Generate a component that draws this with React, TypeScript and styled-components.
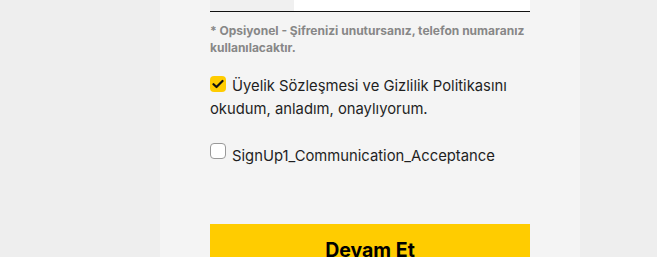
import React, { useState } from 'react';
import styled, { createGlobalStyle } from 'styled-components';

const GlobalStyle = createGlobalStyle`
  html, body {
    margin: 0;
    padding: 0;
    background: #eeeeee;
    font-family: Inter, "Noto Sans", sans-serif;
    overflow: hidden;
  }
`;

const Page = styled.div`
  display: flex;
  width: 657px;
  height: 257px;
  padding-left: 160px;
  box-sizing: border-box;
`;

const Panel = styled.div`
  width: 420px;
  flex-shrink: 0;
  background: #f4f4f4;
  padding: 0 50px;
  box-sizing: border-box;
  display: flex;
  flex-direction: column;
  margin-top: -30px;
`;

const PhoneField = styled.div`
  display: flex;
  flex-shrink: 0;
  height: 41px;
  border-bottom: 1px solid #111111;
`;

const CodeBox = styled.div`
  width: 84px;
  background: #f0f0f0;
`;

const NumberInput = styled.input`
  flex: 1;
  min-width: 0;
  border: none;
  background: #ffffff;
  outline: none;
  font-family: inherit;
`;

const Hint = styled.p`
  margin: 10px 0 0;
  font-size: 12px;
  line-height: 17px;
  font-weight: 700;
  color: #878787;
`;

const CheckLabel = styled.label<{ $top: number }>`
  display: block;
  margin-top: ${(p) => p.$top}px;
  font-size: 14.8px;
  line-height: 23px;
  color: #1f1f1f;
  cursor: pointer;
`;

const Box = styled.span<{ $checked: boolean }>`
  display: inline-flex;
  align-items: center;
  justify-content: center;
  width: 16px;
  height: 16px;
  box-sizing: border-box;
  margin: -4px 6px 0 0;
  vertical-align: 2px;
  border-radius: 4px;
  background: ${(p) => (p.$checked ? '#ffcc00' : '#ffffff')};
  border: ${(p) => (p.$checked ? 'none' : '1px solid #999999')};
`;

const HiddenInput = styled.input`
  display: none;
`;

const SubmitButton = styled.button`
  flex-shrink: 0;
  margin-top: 56px;
  height: 52px;
  border: none;
  background: #ffcc00;
  font-family: inherit;
  font-size: 19.5px;
  font-weight: 700;
  color: #000000;
  cursor: pointer;
`;

function Check({ checked, onToggle }: { checked: boolean; onToggle: () => void }) {
  return (
    <>
      <HiddenInput type="checkbox" checked={checked} onChange={onToggle} />
      <Box $checked={checked}>
        {checked && (
          <svg width="12" height="10" viewBox="0 0 12 10">
            <path d="M1.5 5.2 L4.5 8 L10.5 2" fill="none" stroke="#111" strokeWidth="2.2" strokeLinecap="round" strokeLinejoin="round" />
          </svg>
        )}
      </Box>
    </>
  );
}

export default function App() {
  const [agreement, setAgreement] = useState(true);
  const [communication, setCommunication] = useState(false);

  return (
    <>
      <GlobalStyle />
      <Page>
        <Panel>
          <PhoneField>
            <CodeBox />
            <NumberInput type="tel" />
          </PhoneField>
          <Hint>* Opsiyonel - Şifrenizi unutursanız, telefon numaranız kullanılacaktır.</Hint>
          <CheckLabel $top={19}>
            <Check checked={agreement} onToggle={() => setAgreement(!agreement)} />
            Üyelik Sözleşmesi ve Gizlilik Politikasını okudum, anladım, onaylıyorum.
          </CheckLabel>
          <CheckLabel $top={24}>
            <Check checked={communication} onToggle={() => setCommunication(!communication)} />
            SignUp1_Communication_Acceptance
          </CheckLabel>
          <SubmitButton type="button">Devam Et</SubmitButton>
        </Panel>
      </Page>
    </>
  );
}
